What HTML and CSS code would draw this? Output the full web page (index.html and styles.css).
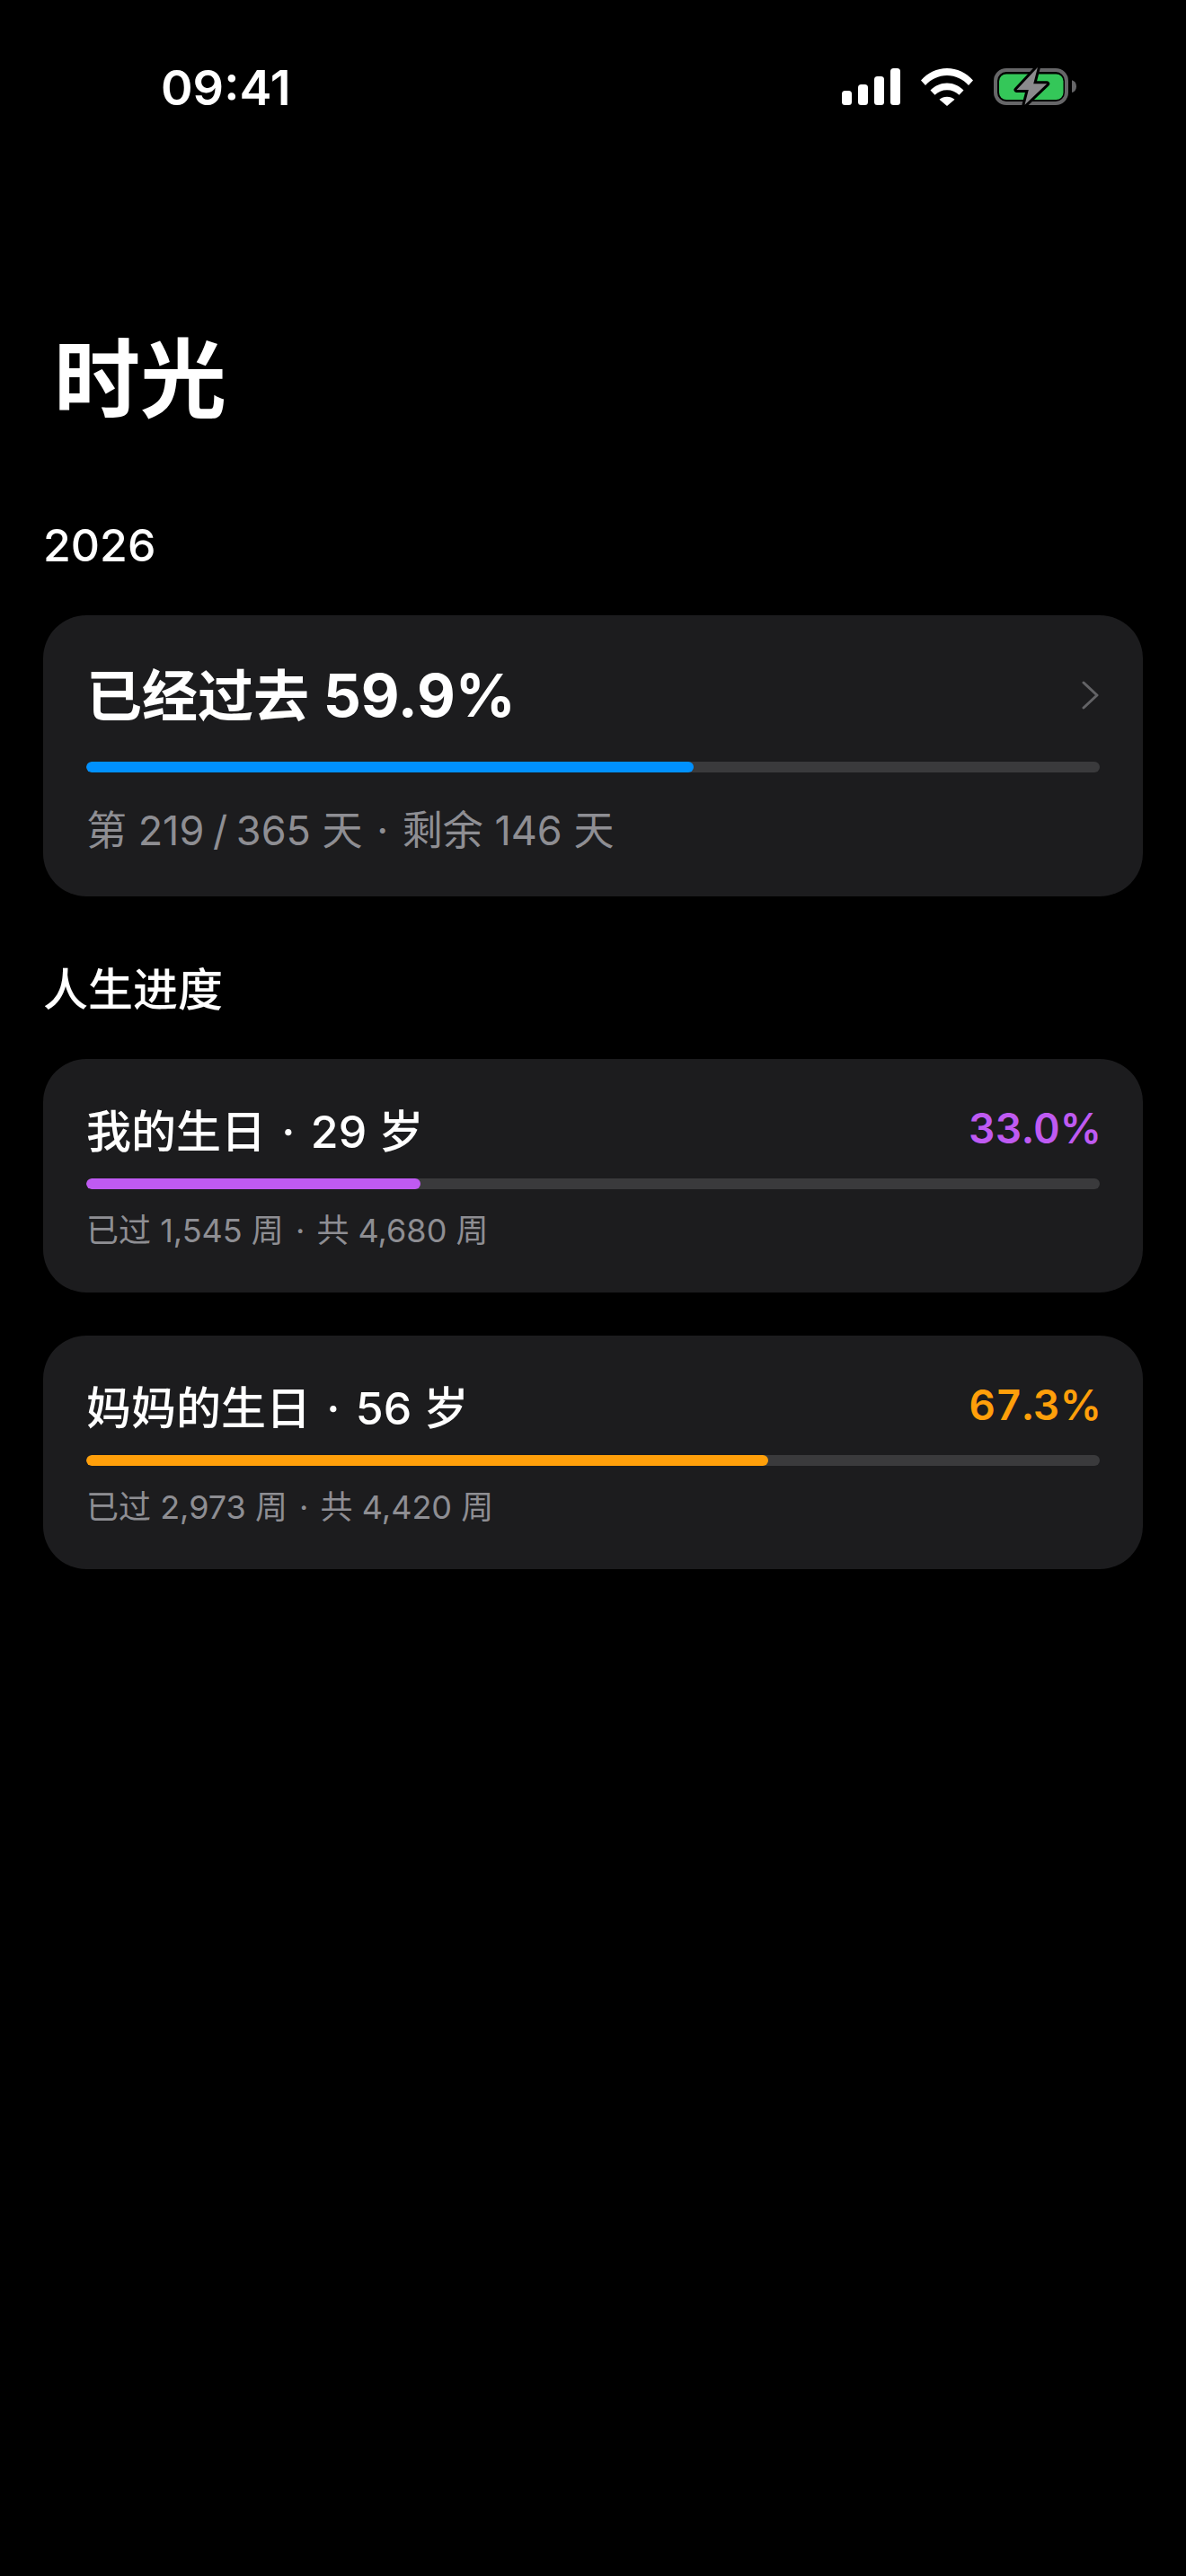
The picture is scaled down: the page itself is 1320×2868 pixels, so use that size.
FILE: index.html
```html
<!DOCTYPE html>
<html lang="zh-CN">
<head>
    <meta charset="UTF-8">
    <meta name="viewport" content="width=device-width, initial-scale=1.0">
    <title>时光</title>
    <link rel="stylesheet" href="styles.css">
</head>
<body>
    <div class="status-bar">
        <span class="status-time">09:41</span>
        <div class="status-icons">
            <svg class="icon-signal" width="65" height="41" viewBox="0 0 65 41">
                <rect x="0" y="25" width="11" height="16" rx="3.5"/>
                <rect x="18" y="18" width="11" height="23" rx="3.5"/>
                <rect x="36" y="9" width="11" height="32" rx="3.5"/>
                <rect x="54" y="0" width="11" height="41" rx="3.5"/>
            </svg>
            <svg class="icon-wifi" width="58" height="42" viewBox="0 0 58 42">
                <path d="M0 13.5C7.5 5 17.8 0 29 0s21.500 5 29 13.500l-5 5.500C46.700 12 38.300 8 29 8S11.300 12 5 19z"/>
                <path d="M10.500 24.500C15.300 19.500 21.800 16.500 29 16.500s13.700 3 18.500 8l-5 5.300C39 26.300 34.300 24.300 29 24.300s-10 2-13.500 5.500z"/>
                <path d="M20.500 34.800C22.800 32.800 25.700 31.800 29 31.800s6.200 1 8.500 3L29 42z"/>
            </svg>
            <svg class="icon-battery" width="93" height="48" viewBox="0 0 93 48">
                <rect x="2" y="6" width="79" height="37" rx="12" fill="none" stroke="#666668" stroke-width="4"/>
                <rect x="6" y="10.500" width="71.500" height="28.500" rx="8" fill="#34c759"/>
                <path d="M87 17.300c3 .8 5 3.200 5 6.900s-2 6.100-5 6.900z" fill="#666668"/>
                <path d="M48.900 3L25.500 28h13.300l-4.300 16.700L59.200 21.300h-15z" fill="#8a8a8c" stroke="#000" stroke-width="6" stroke-linejoin="round" paint-order="stroke"/>
            </svg>
        </div>
    </div>

    <h1 class="page-title">时光</h1>

    <h2 class="section-label">2026</h2>
    <div class="card year-card">
        <div class="year-head">
            <span class="year-title">已经过去 <span class="year-num">59.9%</span></span>
            <svg class="chevron" width="19" height="32" viewBox="0 0 19 32">
                <path d="M2 2l15 14L2 30" fill="none" stroke="#636366" stroke-width="3" stroke-linecap="round" stroke-linejoin="round"/>
            </svg>
        </div>
        <div class="bar"><div class="bar-fill fill-blue" style="width: 59.9%"></div></div>
        <p class="year-sub">第 219 <span class="slash">/</span> 365 天 <span class="dot">·</span> 剩余 146 天</p>
    </div>

    <h2 class="section-label section-life">人生进度</h2>
    <div class="card life-card">
        <div class="life-head">
            <span class="life-title">我的生日 <span class="dot">·</span> 29 岁</span>
            <span class="life-pct text-purple">33.0%</span>
        </div>
        <div class="bar"><div class="bar-fill fill-purple" style="width: 33%"></div></div>
        <p class="life-sub">已过 1,545 周 <span class="dot">·</span> 共 4,680 周</p>
    </div>
    <div class="card life-card">
        <div class="life-head">
            <span class="life-title">妈妈的生日 <span class="dot">·</span> 56 岁</span>
            <span class="life-pct text-orange">67.3%</span>
        </div>
        <div class="bar"><div class="bar-fill fill-orange" style="width: 67.3%"></div></div>
        <p class="life-sub">已过 2,973 周 <span class="dot">·</span> 共 4,420 周</p>
    </div>
</body>
</html>
```
FILE: styles.css
```css
* {
    box-sizing: border-box;
}

body {
    margin: 0;
    min-height: 2868px;
    background-color: #000;
    color: #fff;
    font-family: Inter, "Noto Sans CJK SC", sans-serif;
}

/* Status bar */
.status-bar {
    display: flex;
    justify-content: space-between;
    align-items: center;
    height: 44px;
    margin-top: 76px;
    padding: 0 121px 0 179px;
}

.status-time {
    font-size: 54px;
    font-weight: 600;
    line-height: 44px;
}

.status-icons {
    display: flex;
    align-items: flex-start;
    gap: 23px;
    margin-top: -4px;
    fill: #fff;
}

.icon-signal,
.icon-wifi {
    margin-top: 4px;
}

/* Headings */
.page-title {
    margin: 247px 0 0 60px;
    font-size: 96px;
    font-weight: 700;
    line-height: 110px;
}

.section-label {
    margin: 100px 0 48px 48px;
    font-size: 50px;
    font-weight: 500;
    line-height: 60px;
}

.section-life {
    margin: 74px 0 47px 48px;
}

/* Cards */
.card {
    margin: 0 48px 48px;
    padding: 48px 48px 45px;
    background: #1c1c1e;
    border-radius: 48px;
}

.year-card {
    margin-bottom: 0;
}

.year-head,
.life-head {
    display: flex;
    justify-content: space-between;
    align-items: center;
}

.year-head {
    height: 76px;
    margin-bottom: 39px;
}

.year-title {
    font-size: 62px;
    font-weight: 600;
}

.year-num {
    font-size: 66px;
    font-weight: 700;
}

.chevron {
    margin: 5px 1px 0 0;
}

.year-sub {
    margin: 37px 0 0;
    font-size: 45px;
    line-height: 56px;
    color: #8e8e93;
}

.year-sub .slash {
    margin: 0 -3px;
}

.year-sub .dot {
    margin: 0 3px;
}

.life-head {
    height: 58px;
    margin-bottom: 27px;
}

.life-title {
    font-size: 50px;
    font-weight: 500;
}

.life-title .dot {
    margin: 0 4px;
}

.life-pct {
    margin-right: -2px;
    font-size: 46px;
    font-weight: 600;
    font-variant-numeric: tabular-nums;
}

.life-sub {
    margin: 22px 0 0;
    font-size: 36px;
    line-height: 48px;
    color: #8e8e93;
}

.life-sub .dot {
    margin: 0 3px;
}

/* Progress bars */
.bar {
    height: 12px;
    background: #3a3a3c;
    border-radius: 6px;
    overflow: hidden;
}

.bar-fill {
    height: 100%;
    border-radius: 6px;
}

.fill-blue {
    background: #0091ff;
}

.fill-purple {
    background: #bf5af2;
}

.fill-orange {
    background: #ff9f0a;
}

.text-purple {
    color: #bf5af2;
}

.text-orange {
    color: #ff9f0a;
}
```
